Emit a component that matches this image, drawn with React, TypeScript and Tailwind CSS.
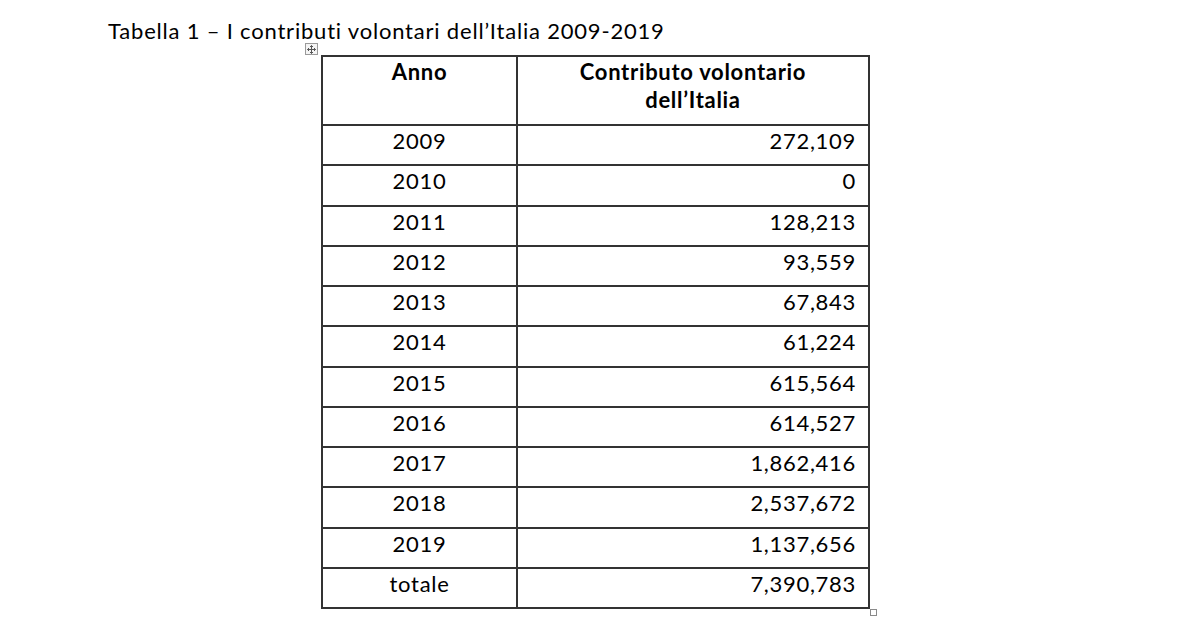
const rows: [string, string][] = [
  ["2009", "272,109"],
  ["2010", "0"],
  ["2011", "128,213"],
  ["2012", "93,559"],
  ["2013", "67,843"],
  ["2014", "61,224"],
  ["2015", "615,564"],
  ["2016", "614,527"],
  ["2017", "1,862,416"],
  ["2018", "2,537,672"],
  ["2019", "1,137,656"],
  ["totale", "7,390,783"],
]

export default function App() {
  return (
    <div className="relative h-[630px] w-[1200px] overflow-hidden bg-white text-black font-['Lato','Liberation_Sans',sans-serif]">
      <h1 className="pl-[108px] pt-[18px] text-[22px] leading-[26px] tracking-[0.8px]">
        Tabella 1 – I contributi volontari dell’Italia 2009-2019
      </h1>

      <div className="relative ml-[321px] mt-[11px] w-[549px]">
        {/* table move handle */}
        <div className="absolute -left-[16px] -top-[12px] flex h-[12px] w-[13px] items-center justify-center border border-[#9a9a9a] bg-[#f4f4f4]">
          <svg width="9" height="9" viewBox="0 0 9 9" fill="none" stroke="#555" strokeWidth="1">
            <path d="M4.5 0.5v8M0.5 4.5h8M3 2l1.5-1.5L6 2M3 7l1.5 1.5L6 7M2 3L0.5 4.5 2 6M7 3l1.5 1.5L7 6" />
          </svg>
        </div>

        <table className="w-full table-fixed border-collapse text-[22px] tracking-[0.7px]">
          <colgroup>
            <col className="w-[195px]" />
            <col />
          </colgroup>
          <thead>
            <tr className="h-[69px]">
              <th className="border-2 border-[#333] align-top pt-[1px] text-center font-bold leading-[28px]">Anno</th>
              <th className="border-2 border-[#333] align-top pt-[1px] text-center font-bold leading-[28px]">
                Contributo volontario
                <br />
                dell’Italia
              </th>
            </tr>
          </thead>
          <tbody>
            {rows.map(([year, value]) => (
              <tr key={year} className="h-[40.25px]">
                <td className="border-2 border-[#333] align-top pt-0 text-center leading-[30px]">{year}</td>
                <td className="border-2 border-[#333] align-top pt-0 pr-[12px] text-right leading-[30px]">{value}</td>
              </tr>
            ))}
          </tbody>
        </table>

        {/* resize handle */}
        <div className="absolute -bottom-[7px] -right-[7px] h-[7px] w-[7px] border border-[#8a8a8a] bg-white" />
      </div>
    </div>
  )
}
